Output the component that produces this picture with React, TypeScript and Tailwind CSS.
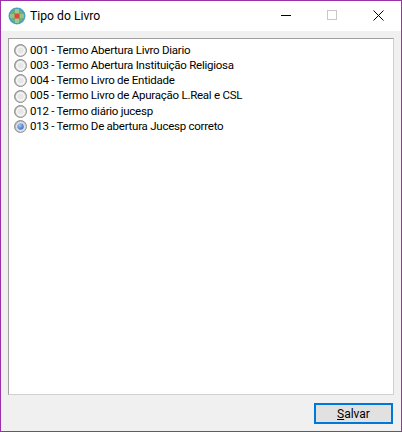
const options = [
  { id: "001", label: "001 - Termo Abertura Livro Diario" },
  { id: "003", label: "003 - Termo Abertura Instituição Religiosa" },
  { id: "004", label: "004 - Termo Livro de Entidade" },
  { id: "005", label: "005 - Termo Livro de Apuração L.Real e CSL" },
  { id: "012", label: "012 - Termo diário jucesp" },
  { id: "013", label: "013 - Termo De abertura Jucesp correto" },
];

const selected = "013";

const AppIcon = () => (
  <svg width="18" height="18" viewBox="0 0 18 18" className="shrink-0">
    <circle cx="9" cy="9" r="8.5" fill="#4f9fc4" />
    <circle cx="9" cy="9" r="6.5" fill="#6fb465" />
    <rect x="2" y="7" width="14" height="4" fill="#a3d39a" opacity="0.6" />
    <rect x="7" y="2" width="4" height="14" fill="#b5dca8" opacity="0.6" />
    <rect x="6.5" y="6.5" width="5" height="5" fill="#e8413f" />
  </svg>
);

const Radio = ({ checked }: { checked: boolean }) => (
  <svg width="13" height="13" viewBox="0 0 13 13" className="shrink-0">
    <defs>
      <linearGradient id="face" x1="0" y1="0" x2="1" y2="1">
        <stop offset="0" stopColor="#a8a8a8" />
        <stop offset="1" stopColor="#e8e8e8" />
      </linearGradient>
      <radialGradient id="dot" cx="0.4" cy="0.35" r="0.7">
        <stop offset="0" stopColor="#a6c6f0" />
        <stop offset="1" stopColor="#2a5db5" />
      </radialGradient>
    </defs>
    <circle cx="6.5" cy="6.5" r="6" fill="url(#face)" stroke="#8e8e8e" strokeWidth="1" />
    <circle cx="6.5" cy="6.5" r="3.9" fill={checked ? "url(#dot)" : "#e6e6e6"} stroke={checked ? "#e4e9f2" : "#fcfcfc"} strokeWidth="1.2" />
  </svg>
);

export default function App() {
  return (
    <div className="w-[402px] h-[432px] flex flex-col border border-[#9b30a8] bg-[#f0f0f0] font-['Roboto','Noto_Sans',sans-serif] text-black overflow-hidden">
      {/* title bar */}
      <div className="h-[30px] shrink-0 bg-white flex items-center pl-[7px]">
        <AppIcon />
        <span className="ml-[4px] text-[12.2px]">Tipo do Livro</span>
        <div className="ml-auto flex h-full items-center pb-[2px]">
          <button className="w-[46px] h-full flex items-center justify-center">
            <span className="block w-[10px] h-px bg-black" />
          </button>
          <button className="w-[46px] h-full flex items-center justify-center">
            <span className="block w-[10px] h-[10px] border border-[#c8c8c8]" />
          </button>
          <button className="w-[46px] h-full flex items-center justify-center">
            <svg width="11" height="11" viewBox="0 0 11 11" stroke="#000" strokeWidth="1" fill="none">
              <path d="M0.5 0.5L10.5 10.5M10.5 0.5L0.5 10.5" />
            </svg>
          </button>
        </div>
      </div>

      {/* content */}
      <div className="flex-1 flex flex-col px-[7px] pt-[7px] pb-[7px]">
        <div className="flex-1 bg-white border border-[#a0a0a0] border-r-[#d0d0d0] border-b-[#d0d0d0] pt-[4px] pl-[5px]">
          <div className="flex flex-col">
            {options.map((o) => (
              <label key={o.id} className="h-[15.2px] flex items-center gap-[3px] text-[11.5px] tracking-[-0.25px] leading-none">
                <Radio checked={o.id === selected} />
                <span>{o.label}</span>
              </label>
            ))}
          </div>
        </div>
        <div className="flex justify-end pt-[8px] pr-[1px]">
          <button className="w-[79px] h-[21px] bg-[#e1e1e1] border-2 border-[#0078d7] text-[12px] leading-none">
            <span className="underline">S</span>alvar
          </button>
        </div>
      </div>
    </div>
  );
}
